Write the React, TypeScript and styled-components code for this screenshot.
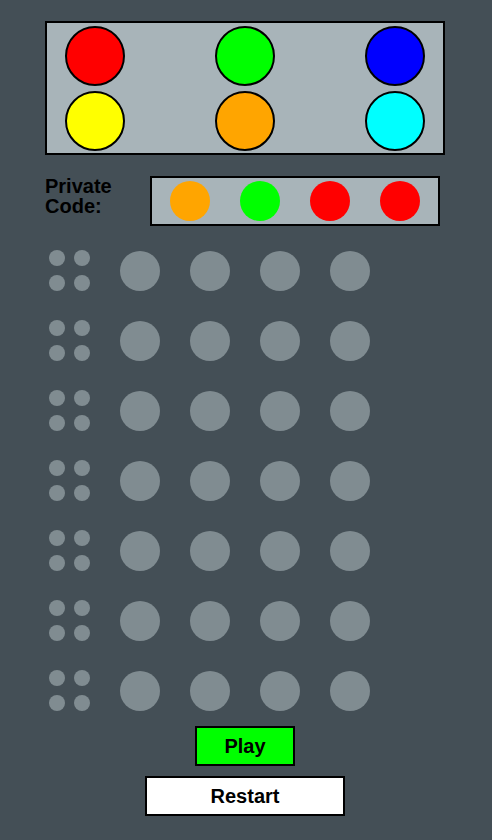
import React from "react";
import styled, { createGlobalStyle } from "styled-components";

const GlobalStyle = createGlobalStyle`
  html, body {
    margin: 0;
    padding: 0;
    background: #444f56;
  }
  body {
    font-family: "Liberation Sans", Arial, sans-serif;
  }
`;

const Page = styled.div`
  width: 400px;
  padding: 21px 0 0 45px;
  display: flex;
  flex-direction: column;
`;

const Palette = styled.div`
  box-sizing: border-box;
  width: 400px;
  border: 2px solid #000;
  background: #a8b4b9;
  padding: 3px 18px 2px;
  display: flex;
  flex-direction: column;
  gap: 5px;
`;

const PaletteRow = styled.div`
  display: flex;
  justify-content: space-between;
`;

const PaletteColor = styled.div<{ $c: string }>`
  box-sizing: border-box;
  width: 60px;
  height: 60px;
  border-radius: 50%;
  border: 2px solid #000;
  background: ${(p) => p.$c};
`;

const CodeRow = styled.div`
  margin-top: 21px;
  display: flex;
  align-items: flex-start;
`;

const Label = styled.div`
  width: 105px;
  font-weight: bold;
  font-size: 20px;
  line-height: 20px;
  color: #000;
`;

const CodeBox = styled.div`
  box-sizing: border-box;
  width: 290px;
  height: 50px;
  border: 2px solid #000;
  background: #a8b4b9;
  padding: 0 18px;
  display: flex;
  align-items: center;
  justify-content: space-between;
`;

const CodePeg = styled.div<{ $c: string }>`
  width: 40px;
  height: 40px;
  border-radius: 50%;
  background: ${(p) => p.$c};
`;

const Board = styled.div`
  margin-top: 24px;
  display: flex;
  flex-direction: column;
  gap: 29px;
`;

const Row = styled.div`
  display: flex;
  align-items: center;
  gap: 30px;
  padding-left: 4px;
`;

const Feedback = styled.div`
  display: grid;
  grid-template-columns: 16px 16px;
  grid-template-rows: 16px 16px;
  gap: 9px;
`;

const SmallPeg = styled.div`
  width: 16px;
  height: 16px;
  border-radius: 50%;
  background: #808c91;
`;

const Hole = styled.div`
  width: 40px;
  height: 40px;
  border-radius: 50%;
  background: #808c91;
`;

const Button = styled.button<{ $bg: string; $w: number }>`
  box-sizing: border-box;
  align-self: center;
  width: ${(p) => p.$w}px;
  height: 40px;
  border: 2px solid #000;
  background: ${(p) => p.$bg};
  font-family: "Liberation Sans", Arial, sans-serif;
  font-weight: bold;
  font-size: 20px;
  color: #000;
  padding: 0;
  cursor: pointer;
`;

const PlayButton = styled(Button)`
  margin-top: 15px;
`;

const RestartButton = styled(Button)`
  margin-top: 10px;
`;

const palette = [
  ["#ff0000", "#00ff00", "#0000ff"],
  ["#ffff00", "#ffa500", "#00ffff"],
];

const code = ["#ffa500", "#00ff00", "#ff0000", "#ff0000"];

export default function App() {
  return (
    <>
      <GlobalStyle />
      <Page>
        <Palette>
          {palette.map((row, i) => (
            <PaletteRow key={i}>
              {row.map((c, j) => (
                <PaletteColor key={j} $c={c} />
              ))}
            </PaletteRow>
          ))}
        </Palette>
        <CodeRow>
          <Label>
            Private
            <br />
            Code:
          </Label>
          <CodeBox>
            {code.map((c, i) => (
              <CodePeg key={i} $c={c} />
            ))}
          </CodeBox>
        </CodeRow>
        <Board>
          {Array.from({ length: 7 }).map((_, r) => (
            <Row key={r}>
              <Feedback>
                <SmallPeg />
                <SmallPeg />
                <SmallPeg />
                <SmallPeg />
              </Feedback>
              <Hole />
              <Hole />
              <Hole />
              <Hole />
            </Row>
          ))}
        </Board>
        <PlayButton $bg="#00ff00" $w={100}>
          Play
        </PlayButton>
        <RestartButton $bg="#ffffff" $w={200}>
          Restart
        </RestartButton>
      </Page>
    </>
  );
}
